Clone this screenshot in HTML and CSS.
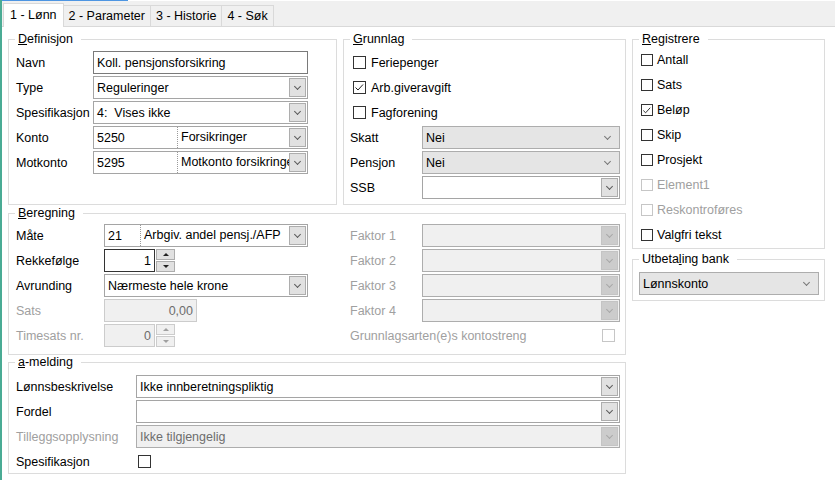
FILE: index.html
```html
<!DOCTYPE html>
<html lang="no">
<head>
    <meta charset="UTF-8">
    <title>Lønnsart</title>
    <link rel="stylesheet" href="styles.css">
</head>
<body>
<div class="app">
    <div class="topline"></div>
    <div class="tabs">
        <div class="tab active">1 - Lønn</div>
        <div class="tab">2 - Parameter</div>
        <div class="tab">3 - Historie</div>
        <div class="tab">4 - Søk</div>
    </div>

    <div class="page">
        <div class="main">
            <div class="top">
                <fieldset class="def">
                    <legend><u>D</u>efinisjon</legend>
                    <div class="body">
                        <div class="row"><span class="lbl">Navn</span><div class="field w215">Koll. pensjonsforsikring</div></div>
                        <div class="row"><span class="lbl">Type</span><div class="combo w215"><span class="val">Reguleringer</span><span class="btn"></span></div></div>
                        <div class="row"><span class="lbl">Spesifikasjon</span><div class="combo w215"><span class="val">4:&nbsp; Vises ikke</span><span class="btn"></span></div></div>
                        <div class="row"><span class="lbl">Konto</span><div class="combo w215"><span class="code c83">5250</span><span class="val split">Forsikringer</span><span class="btn"></span></div></div>
                        <div class="row"><span class="lbl">Motkonto</span><div class="combo w215"><span class="code c83">5295</span><span class="val split">Motkonto forsikringe</span><span class="btn"></span></div></div>
                    </div>
                </fieldset>

                <fieldset class="grn">
                    <legend><u>G</u>runnlag</legend>
                    <div class="body">
                        <div class="row chk"><span class="cb"></span>Feriepenger</div>
                        <div class="row chk"><span class="cb"><svg viewBox="0 0 13 13"><path d="M2.5 6.5 L5 9 L10 3.5"/></svg></span>Arb.giveravgift</div>
                        <div class="row chk"><span class="cb"></span>Fagforening</div>
                        <div class="row"><span class="lbl">Skatt</span><div class="combo flat w198"><span class="val">Nei</span><span class="btn"></span></div></div>
                        <div class="row"><span class="lbl">Pensjon</span><div class="combo flat w198"><span class="val">Nei</span><span class="btn"></span></div></div>
                        <div class="row"><span class="lbl">SSB</span><div class="combo w198"><span class="val"></span><span class="btn"></span></div></div>
                    </div>
                </fieldset>
            </div>

            <fieldset class="calc">
                <legend><u>B</u>eregning</legend>
                <div class="body">
                    <div class="col left">
                        <div class="row"><span class="lbl">Måte</span><div class="combo w204"><span class="code c35">21</span><span class="val split">Arbgiv. andel pensj./AFP</span><span class="btn"></span></div></div>
                        <div class="row"><span class="lbl">Rekkefølge</span><div class="field num focus w51">1</div><div class="spin"><span class="up"></span><span class="dn"></span></div></div>
                        <div class="row"><span class="lbl">Avrunding</span><div class="combo w204"><span class="val">Nærmeste hele krone</span><span class="btn"></span></div></div>
                        <div class="row"><span class="lbl dim">Sats</span><div class="field num off w93">0,00</div></div>
                        <div class="row"><span class="lbl dim">Timesats nr.</span><div class="field num off w51">0</div><div class="spin off"><span class="up"></span><span class="dn"></span></div></div>
                    </div>
                    <div class="col right">
                        <div class="row"><span class="lbl dim">Faktor 1</span><div class="combo off w198"><span class="val"></span><span class="btn"></span></div></div>
                        <div class="row"><span class="lbl dim">Faktor 2</span><div class="combo off w198"><span class="val"></span><span class="btn"></span></div></div>
                        <div class="row"><span class="lbl dim">Faktor 3</span><div class="combo off w198"><span class="val"></span><span class="btn"></span></div></div>
                        <div class="row"><span class="lbl dim">Faktor 4</span><div class="combo off w198"><span class="val"></span><span class="btn"></span></div></div>
                        <div class="row wide"><span class="lbl dim">Grunnlagsarten(e)s kontostreng</span><span class="cb off"></span></div>
                    </div>
                </div>
            </fieldset>

            <fieldset class="amld">
                <legend><u>a</u>-melding</legend>
                <div class="body">
                    <div class="row"><span class="lbl">Lønnsbeskrivelse</span><div class="combo w484"><span class="val">Ikke innberetningspliktig</span><span class="btn"></span></div></div>
                    <div class="row"><span class="lbl">Fordel</span><div class="combo w484"><span class="val"></span><span class="btn"></span></div></div>
                    <div class="row"><span class="lbl dim">Tilleggsopplysning</span><div class="combo off w484"><span class="val">Ikke tilgjengelig</span><span class="btn"></span></div></div>
                    <div class="row"><span class="lbl">Spesifikasjon</span><span class="cb shift"></span></div>
                </div>
            </fieldset>
        </div>

        <div class="side">
            <fieldset class="reg">
                <legend><u>R</u>egistrere</legend>
                <div class="body">
                    <div class="row chk"><span class="cb"></span>Antall</div>
                    <div class="row chk"><span class="cb"></span>Sats</div>
                    <div class="row chk"><span class="cb"><svg viewBox="0 0 13 13"><path d="M2.5 6.5 L5 9 L10 3.5"/></svg></span>Beløp</div>
                    <div class="row chk"><span class="cb"></span>Skip</div>
                    <div class="row chk"><span class="cb"></span>Prosjekt</div>
                    <div class="row chk dim"><span class="cb off"></span>Element1</div>
                    <div class="row chk dim"><span class="cb off"></span>Reskontroføres</div>
                    <div class="row chk"><span class="cb"></span>Valgfri tekst</div>
                </div>
            </fieldset>

            <fieldset class="bank">
                <legend>Utbeta<u>l</u>ing bank</legend>
                <div class="body">
                    <div class="combo flat w180"><span class="val">Lønnskonto</span><span class="btn"></span></div>
                </div>
            </fieldset>
        </div>
    </div>
</div>
</body>
</html>
```

FILE: styles.css
```css
body {
    margin: 0;
    background: #ffffff;
    font-family: "Liberation Sans", Arial, sans-serif;
    font-size: 12.5px;
    color: #000000;
}
.app {
    border-left: 2px solid #4aab94;
    height: 480px;
    box-sizing: border-box;
}
.topline {
    width: 126px;
    height: 1px;
    background: #4d95e2;
}

/* tabs */
.tabs {
    display: flex;
    align-items: flex-end;
    height: 25px;
    padding-left: 1px;
    background: #f0f0f0;
    border-bottom: 1px solid #d9d9d9;
}
.tab {
    height: 21px;
    line-height: 20px;
    padding: 0 5px;
    margin-right: -1px;
    border: 1px solid #d9d9d9;
    border-bottom: none;
    box-sizing: border-box;
    background: #f0f0f0;
}
.tab.active {
    height: 24px;
    line-height: 22px;
    padding: 0 6px;
    margin-bottom: -1px;
    background: #ffffff;
    position: relative;
    z-index: 1;
}

/* layout */
.page {
    display: flex;
    gap: 6px;
    padding: 5px 0 0 6px;
}
.main {
    width: 618px;
    display: flex;
    flex-direction: column;
}
.top {
    display: flex;
    gap: 6px;
}
.side {
    width: 193px;
    display: flex;
    flex-direction: column;
}

fieldset {
    margin: 0;
    padding: 0;
    min-width: 0;
    border: 1px solid #dcdcdc;
}
legend {
    margin-left: 6px;
    padding: 0 8px 0 3px;
    line-height: 14px;
}
.body {
    display: flex;
    flex-direction: column;
    gap: 2px;
}

.def {
    width: 329px;
    box-sizing: border-box;
}
.def .body {
    padding: 5px 0 0 7px;
}
.def .lbl {
    width: 77px;
}

.grn {
    flex: 1;
}
.grn .body {
    padding: 5px 5px 5px 6px;
}
.grn .lbl {
    width: 72px;
}
.grn .chk {
    padding-left: 3px;
}
.grn .chk .cb {
    margin-right: 5px;
}

.calc {
    margin-top: 1px;
}
.calc .body {
    flex-direction: row;
    gap: 0;
    padding: 4px 0 7px 7px;
}
.col {
    display: flex;
    flex-direction: column;
    gap: 2px;
}
.col.left {
    width: 334px;
}
.col.left .lbl {
    width: 88px;
}
.col.right .lbl {
    width: 72px;
}
.row.wide .lbl {
    width: auto;
    flex: 1;
}
.row.wide .cb {
    margin-right: 5px;
}

.amld .body {
    padding: 6px 0 0 7px;
}
.amld .lbl {
    width: 120px;
}
.cb.shift {
    margin-left: 2px;
}

.reg .body {
    gap: 0;
    padding: 1px 0 1px 8px;
}
.reg .row {
    height: 25px;
}
.reg .cb {
    width: 12px;
    height: 12px;
    margin-right: 4px;
}
.bank {
    margin-top: 3px;
}
.bank .body {
    padding: 6px 5px 5px 6px;
}

/* controls */
.row {
    display: flex;
    align-items: center;
    height: 23px;
    white-space: nowrap;
}
.lbl {
    flex: none;
}
.dim {
    color: #a0a0a0;
}

.field {
    height: 23px;
    box-sizing: border-box;
    border: 1px solid #7a7a7a;
    background: #ffffff;
    padding: 0 3px;
    display: flex;
    align-items: center;
}
.field.num {
    justify-content: flex-end;
}
.field.focus {
    border-color: #333333;
}
.field.off {
    border-color: #cccccc;
    background: #f0f0f0;
    color: #6d6d6d;
}

.combo {
    height: 23px;
    box-sizing: border-box;
    border: 1px solid #a5a5a5;
    background: #ffffff;
    display: flex;
    align-items: center;
    overflow: hidden;
}
.combo .val {
    flex: 1;
    padding-left: 3px;
    overflow: hidden;
    white-space: nowrap;
}
.combo .code {
    flex: none;
    padding-left: 3px;
    box-sizing: border-box;
}
.combo .split {
    border-left: 1px dotted #9a9a9a;
    height: 21px;
    line-height: 21px;
    box-sizing: border-box;
}
.combo .btn {
    flex: none;
    width: 17px;
    height: 19px;
    margin-right: 1px;
    box-sizing: border-box;
    border: 1px solid #adadad;
    background: #e1e1e1;
    display: flex;
    align-items: center;
    justify-content: center;
}
.combo .btn::after {
    content: "";
    width: 4px;
    height: 4px;
    margin-top: -3px;
    border-right: 1px solid #5a5a5a;
    border-bottom: 1px solid #5a5a5a;
    transform: rotate(45deg);
}
.combo.flat {
    background: #e5e5e5;
    border-color: #adadad;
}
.combo.flat .btn {
    background: none;
    border-color: transparent;
    margin-right: 3px;
}
.combo.flat .btn::after {
    border-color: #777777;
}
.combo.off {
    background: #f0f0f0;
    border-color: #adadad;
    color: #6d6d6d;
}
.combo.off .btn {
    background: #cccccc;
    border-color: #c4c4c4;
}
.combo.off .btn::after {
    border-color: #a8a8a8;
}

.c83 { width: 83px; }
.c35 { width: 35px; }
.w215 { width: 215px; }
.w204 { width: 204px; }
.w198 { width: 198px; }
.w180 { width: 180px; }
.w484 { width: 484px; }
.w93 { width: 93px; }
.w51 { width: 51px; }

.spin {
    width: 19px;
    height: 23px;
    margin-left: 1px;
    display: flex;
    flex-direction: column;
    justify-content: space-between;
}
.spin span {
    height: 11px;
    box-sizing: border-box;
    border: 1px solid #adadad;
    background: #e1e1e1;
    display: flex;
    align-items: center;
    justify-content: center;
}
.spin .up::after {
    content: "";
    border-left: 3px solid transparent;
    border-right: 3px solid transparent;
    border-bottom: 3px solid #222222;
}
.spin .dn::after {
    content: "";
    border-left: 3px solid transparent;
    border-right: 3px solid transparent;
    border-top: 3px solid #222222;
}
.spin.off span {
    background: #f0f0f0;
    border-color: #cccccc;
}
.spin.off .up::after {
    border-bottom-color: #a0a0a0;
}
.spin.off .dn::after {
    border-top-color: #a0a0a0;
}

.cb {
    flex: none;
    width: 13px;
    height: 13px;
    box-sizing: border-box;
    border: 1px solid #333333;
    background: #ffffff;
    display: flex;
}
.cb svg {
    margin: -1px;
    width: 13px;
    height: 13px;
}
.cb path {
    fill: none;
    stroke: #222222;
    stroke-width: 1;
}
.cb.off {
    border-color: #c6c6c6;
}
```
